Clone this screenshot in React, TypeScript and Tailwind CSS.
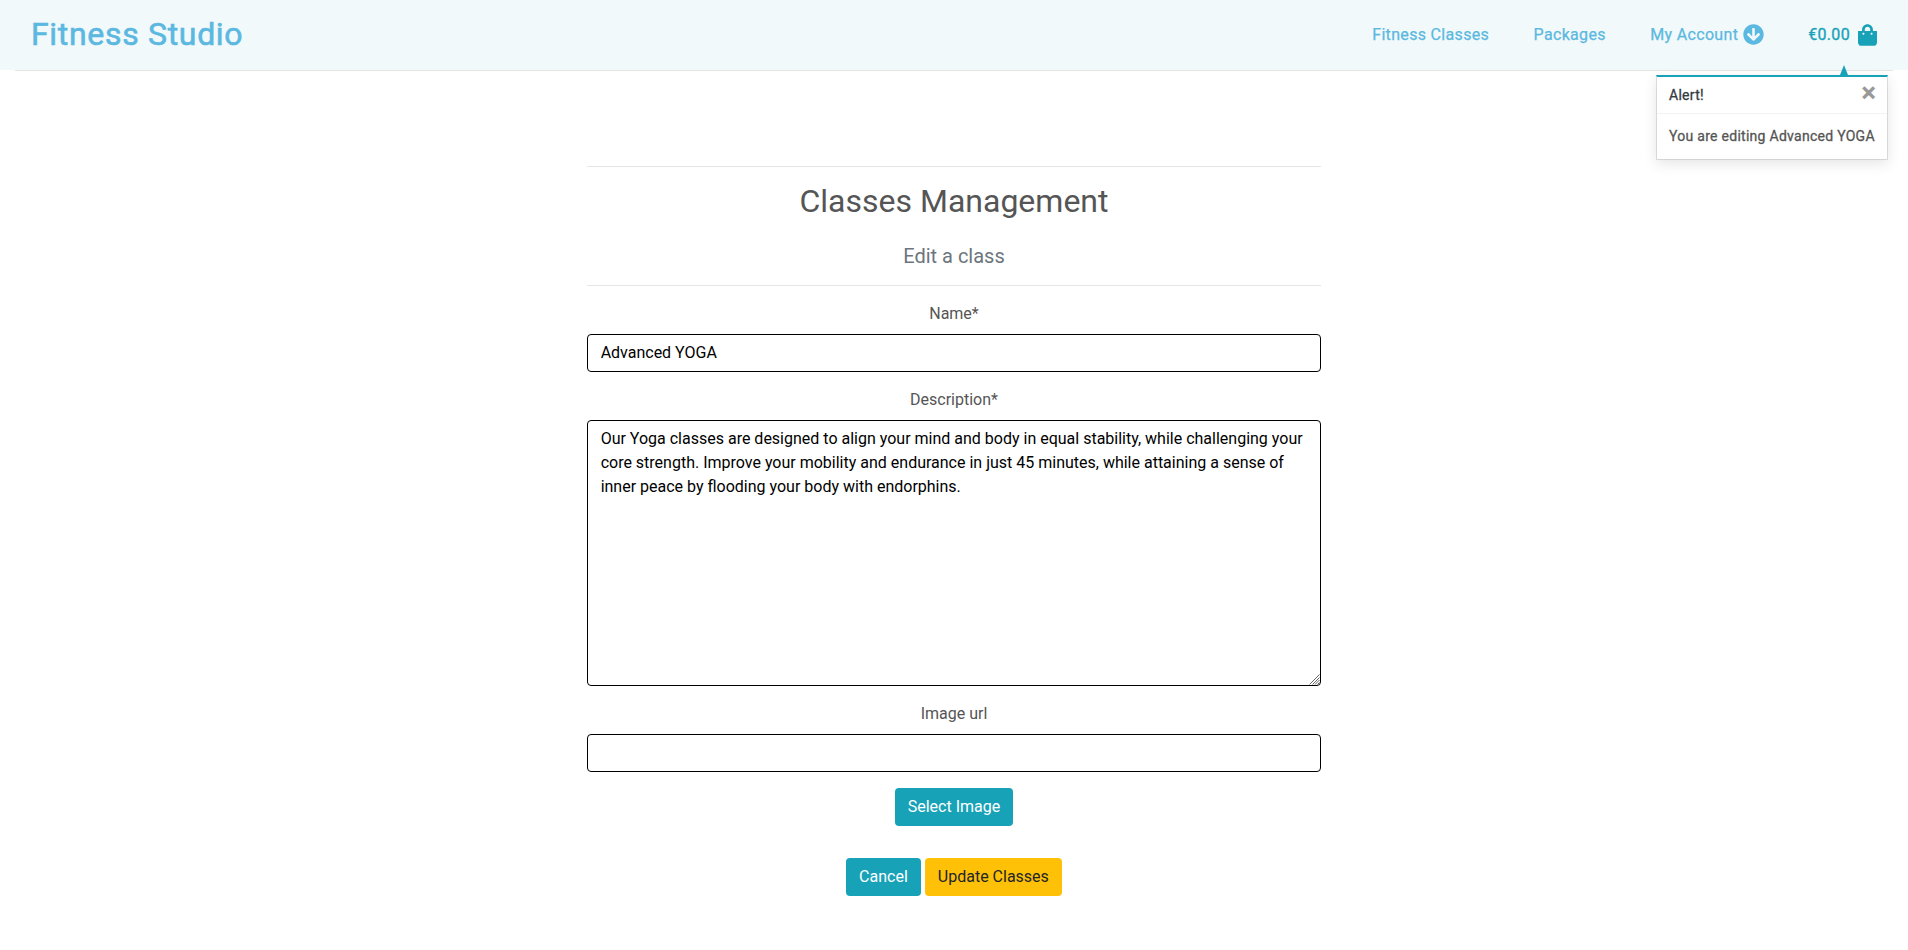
import { FaArrowCircleDown, FaShoppingBag } from "react-icons/fa";

function Header() {
  return (
    <header className="relative h-[69.6px] bg-[#f1f9fb] text-[#5bb8e0]">
      <div className="flex h-full items-center justify-between pr-[31px] pl-[31px]">
        <a className="pb-0.5 text-[32px] leading-[38px] tracking-[0.68px] [-webkit-text-stroke:0.6px]">Fitness Studio</a>
        <nav className="flex items-center tracking-[0.32px] [-webkit-text-stroke:0.25px]">
          <a className="mr-[44.5px]">Fitness Classes</a>
          <a className="mr-[44.5px]">Packages</a>
          <a className="mr-11 flex items-center gap-[5px]">
            My Account <FaArrowCircleDown className="size-[21px]" />
          </a>
          <a className="flex items-center gap-2 text-[#17a2b8] [-webkit-text-stroke:0.35px]">
            €0.00 <FaShoppingBag className="h-[22px] w-[19px]" />
          </a>
        </nav>
      </div>
      <div className="mx-[15px] border-t border-black/10" />
      <Toast />
    </header>
  );
}

function Toast() {
  return (
    <div className="absolute top-[65px] right-[20px] w-[232px] tracking-[0.28px]">
      <svg className="ml-[183px] block" width="10" height="10" viewBox="0 0 10 10">
        <path d="M5 0 9 10H1Z" fill="#17a2b8" />
      </svg>
      <div className="border border-t-2 border-black/10 border-t-[#17a2b8] bg-white bg-clip-padding text-[14px] leading-[21px] shadow-[0_4px_12px_rgba(0,0,0,0.1)]">
        <div className="flex h-[37px] items-center justify-between border-b border-black/5 px-3">
          <strong className="font-normal text-[#343a40] [-webkit-text-stroke:0.3px]">Alert!</strong>
          <span className="-mr-px pb-1.5 text-[28px] font-bold tracking-normal text-[#999]">×</span>
        </div>
        <p className="p-3 whitespace-nowrap text-[#555] [-webkit-text-stroke:0.3px]">You are editing Advanced YOGA</p>
      </div>
    </div>
  );
}

const field = "block w-full rounded border border-black bg-white pt-[5px] pr-3 pb-[7px] pl-[12.3px] text-black";

export default function App() {
  return (
    <div className="h-[950px] overflow-hidden bg-white font-[Roboto,sans-serif] text-base leading-6 text-[#555]">
      <Header />
      <main className="mx-auto mt-24 w-[733.33px] text-center">
        <hr className="mb-[15px] border-black/10" />
        <h2 className="mb-6 text-[32px] leading-[38.4px]">Classes Management</h2>
        <h5 className="mb-[17px] text-[20px] leading-6 text-[#6c757d]">Edit a class</h5>
        <hr className="mb-4 border-black/10" />
        <label className="mb-2 block">Name*</label>
        <input className={`${field} mb-4 h-[38px]`} defaultValue="Advanced YOGA" />
        <label className="mb-2 block">Description*</label>
        <div className="relative mb-4">
          <textarea
            className="block h-[266px] w-full resize-none rounded border border-black bg-white py-1.5 pr-3 pl-[12.3px] text-black"
            defaultValue="Our Yoga classes are designed to align your mind and body in equal stability, while challenging your core strength. Improve your mobility and endurance in just 45 minutes, while attaining a sense of inner peace by flooding your body with endorphins."
          />
          <svg className="absolute right-px bottom-px" width="11" height="11" viewBox="0 0 11 11" stroke="#555" strokeWidth="0.9">
            <path d="M0.5 10.5 10.5 0.5M3.5 10.5 10.5 3.5M6 10.5 10.5 6M8.5 10.5 10.5 8.5" />
          </svg>
        </div>
        <label className="mb-2 block">Image url</label>
        <input className={`${field} mb-4 h-[38px]`} />
        <button className="mb-8 h-[38px] rounded bg-[#17a2b8] px-[13px] text-white">Select Image</button>
        <div className="flex justify-center gap-1">
          <button className="h-[38px] rounded bg-[#17a2b8] px-[13px] text-white">Cancel</button>
          <button className="h-[38px] rounded bg-[#ffc107] px-[13px] text-[#212529]">Update Classes</button>
        </div>
      </main>
    </div>
  );
}
